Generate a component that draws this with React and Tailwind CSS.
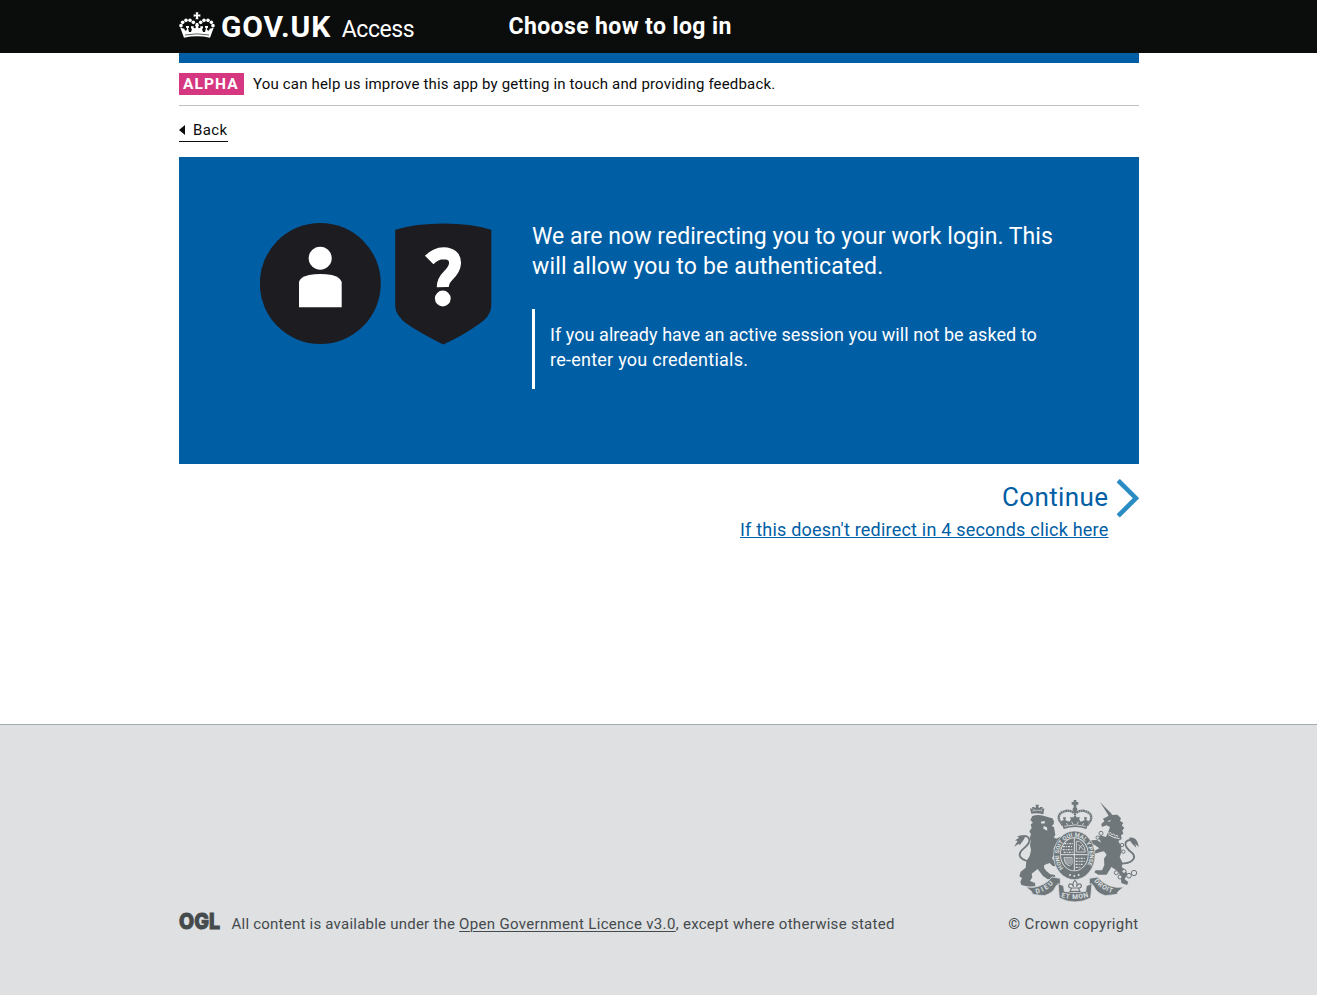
import React from 'react';

function GovCrown() {
  const pearls = [[33, 77], [38, 67], [48, 61], [60, 61], [70, 67]];
  return (
    <svg viewBox="27 36 108 78" className="h-[26px] w-[36px] shrink-0" fill="#fff" aria-hidden="true">
      <path d="M77 37h8l-1 7 7-1v7l-7-1 1 9h-8l1-9-7 1v-7l7 1z" />
      {pearls.map(([x, y]) => (
        <g key={x}>
          <circle cx={x} cy={y} r="5.4" />
          <circle cx={162 - x} cy={y} r="5.4" />
        </g>
      ))}
      <path d="M31 83l12 3 2 6 5-1 1-7-3-1v-5h9v5l-3 1 3 12 6 0 3-9-3-2v-6h8v5l5 1 2-5-3-3 3-8h6l3 8-3 3 2 5 5-1v-5h8v6l-3 2 3 9 6 0 3-12-3-1v-5h9v5l-3 1 1 7 5 1 2-6 12-3-11 30q-39-8-78 0z" />
      <path d="M45 105q36-7 72 0" stroke="#0b0c0c" fill="none" strokeWidth="2" />
    </svg>
  );
}

function IdentityIcons() {
  return (
    <svg viewBox="0 0 232 122" className="h-[122px] w-[232px]" aria-hidden="true">
      <g fill="#1d1c20">
        <circle cx="60.3" cy="60.5" r="60.5" />
        <path d="M135.2 6.8Q156 .5 183.300 .5Q211 .5 231.300 6.800V83Q231 93 219 101Q204 112 183.200 121.500Q162 111 147 101Q135.200 92 135.200 83Z" />
      </g>
      <g fill="#fff">
        <circle cx="60.2" cy="35.200" r="11.500" />
        <path d="M39 84.300V59Q40 54 49 52Q60 50.200 72 52Q80 54 81.700 59V84.300Z" />
        <circle cx="182.800" cy="75.500" r="7.900" />
      </g>
      <path d="M169.200 37Q176 30.200 183.500 30.200Q195.400 30.500 195 40.500Q194.700 46 188.500 52.300Q182.700 58 182.800 64.200" fill="none" stroke="#fff" strokeWidth="12" />
    </svg>
  );
}

function OglLogo() {
  return (
    <svg viewBox="-2 -6 45 30" className="-mx-[2px] -mb-[6px] -mt-[6px] h-[30px] w-[45px] shrink-0 overflow-visible" aria-label="OGL">
      <text x="0" y="17" textLength="41" lengthAdjust="spacingAndGlyphs" fontSize="21.500" fontWeight="800" fill="#454a4c" stroke="#454a4c" strokeWidth="1" className="font-['Inter',sans-serif]">OGL</text>
    </svg>
  );
}

function RoyalArms() {
  const INK = '#6f777b';
  const BG = '#dee0e2';
  return (
    <svg viewBox="27 15 375 306" className="h-[102px] w-[125px]" fill={INK} aria-hidden="true">
      {/* imperial crown */}
      <path d="M206 15h8v6h6v8h-6v8h-8v-8h-6v-8h6z" />
      <circle cx="210" cy="43" r="7" />
      <g fill="none" stroke={INK} strokeWidth="7" strokeDasharray="6 1">
        <path d="M206 53Q192 44 178 49Q156 56 163 76L174 92M214 53Q228 44 242 49Q264 56 257 76L246 92" />
        <path d="M210 48V86" />
      </g>
      <path d="M168 78l8-2-2-9h9l-2 9 12 4 5-8-4-5h32l-4 5 5 8 12-4-2-9h9l-2 9 8 2-8 24q-32-12-68 0z" />
      <path d="M178 94q32-9 64 0M184 84l4 6M236 84l-4 6M200 80l4 8M220 80l-4 8" fill="none" stroke={BG} strokeWidth="2.500" />

      {/* lion */}
      <path d="M79 56l-4-16 7 2-1-6 7 0 2 4 3-5-2-6h11l-2 6 3 5 3-4 7 0-1 6 6-2-3 18q-18-5-36-2z" />
      <path d="M82 48q15-5 30 0M84 42l4 3M111 42l-4 3" stroke={BG} strokeWidth="2" fill="none" />
      <path d="M82 63Q98 57 118 63L130 67 142 70 147 79 146 88 140 92 147 97 149 108 151 120 146 127 154 131 166 125 172 132 166 142 153 148 146 160 148 175 141 190 148 198 152 214 143 213 134 204 118 210 117 218 124 228 136 238 150 240 151 252 128 253 114 243 98 222 80 236 82 247 75 258 90 264 91 274 71 275 49 270 46 260 51 249 43 244 47 230 62 218 64 199 74 183 78 166 75 150 77 138 74 128 78 118 73 109 80 99 77 88 84 83 76 75Z" />
      <path d="M107 80l12-2 1 7-10 1zM116 93l10 4 1 10-12-6z" fill={BG} />
      <path d="M66 198Q36 188 47 170C55 158 76 150 73 133Q66 117 49 127" fill="none" stroke={INK} strokeWidth="5.500" />
      <path d="M62 122Q50 118 36 125L43 128 30 136 38 138 27 155 42 146 44 151 56 134Z" />

      {/* unicorn */}
      <path d="M285 21l36 37-8 7z" />
      <path d="M294 71L310 63 315 52 320 60 337 59 348 70 345 77 355 84 350 91 358 99 352 106 355 116 348 121 350 132 340 138 348 154 350 170 344 186 353 204 350 216 362 225 367 238 359 253 370 261 366 270 349 264 347 244 339 229 319 216 305 239 280 239 268 232 272 226 291 226 298 211 297 191 305 179 297 169 286 171 270 176 266 169 283 160 268 149 258 146 259 136 276 135 289 143 281 130 285 121 303 126 312 105 315 96 304 91 291 96 289 87 298 79Z" />
      <path d="M309 79l8-2M310 119q17 11 34 12" fill="none" stroke={BG} strokeWidth="3" />
      <path d="M307 108l5 8 4-4 5 8 5-4 5 8 5-4 3 6" fill="none" stroke={BG} strokeWidth="2.500" />
      <g fill={BG} stroke={INK} strokeWidth="3">
        <circle cx="288" cy="115" r="6" /><circle cx="278" cy="128" r="5" /><circle cx="351" cy="150" r="5" /><circle cx="355" cy="170" r="5" />
        <circle cx="334" cy="233" r="6" /><circle cx="345" cy="246" r="6" /><circle cx="357" cy="229" r="6" /><circle cx="372" cy="242" r="7" /><circle cx="387" cy="234" r="8" />
      </g>
      <path d="M348 206C378 206 394 192 384 176Q357 157 362 142Q369 131 385 137" fill="none" stroke={INK} strokeWidth="5.500" />
      <path d="M372 128Q390 126 397 140L402 156 391 147 394 158 383 148 378 142Z" />

      {/* garter and shield */}
      <ellipse cx="208" cy="181" rx="62" ry="73" stroke={BG} strokeWidth="2" />
      <ellipse cx="208" cy="178" rx="43" ry="51" fill={BG} />
      <ellipse cx="208" cy="178" rx="40.500" ry="48.500" />
      <g stroke={BG} fill="none">
        <path d="M208 129v98M168 179h80" strokeWidth="3" />
        <g strokeWidth="3.600" strokeDasharray="6 3 3 3">
          <path d="M178 146h26M174 155h30M173 164h31M176 172h28" />
          <path d="M212 190h30M212 199h28M212 208h24M212 217h16" />
        </g>
        <path d="M214 139q10-4 18 8q8 10 9 24h-27zM219 148l18 18M222 165q0-12 10-14" strokeWidth="2.500" />
        <path d="M177 188h24v18q-6 11-14 4q-10-8-10-22M183 190v16M189 190v19M195 190v17" strokeWidth="2.500" />
      </g>
      <path id="garter-arc" d="M176 219.500A46 55 0 1 1 240 219.500" fill="none" />
      <text fontSize="17.500" fontWeight="700" fill={BG} className="font-['Roboto',sans-serif]">
        <textPath href="#garter-arc" textLength="232" lengthAdjust="spacing">HONI SOIT QUI MAL Y PENSE</textPath>
      </text>
      <g fill={BG}><circle cx="195" cy="240" r="3" /><circle cx="208" cy="243" r="3" /><circle cx="221" cy="240" r="3" /></g>

      {/* motto scroll */}
      <g stroke={BG} strokeWidth="2.500">
        <path d="M63 276l22 1q35-5 56-31l25 4 0 22q-12-5-14 3-8 20-34 27l-29-3q-12-2-8-8z" />
        <path d="M356 276l-22 1q-35-5-56-31l-25 4 0 22q12-5 14 3 8 20 34 27l29-3q12-2 8-8z" />
        <path d="M159 266l17 6 2 17q32 7 64 0l2-17 17-6-4 43q-48 24-94 0z" />
      </g>
      <path id="motto-left" d="M94 296Q128 289 153 257" fill="none" />
      <path id="motto-mid" d="M168 306Q210 319 254 304" fill="none" />
      <path id="motto-right" d="M267 258Q290 288 328 295" fill="none" />
      <g fontSize="20" fontWeight="700" fill={BG} className="font-['Roboto',sans-serif]">
        <text><textPath href="#motto-left" textLength="60" lengthAdjust="spacing">DIEU</textPath></text>
        <text><textPath href="#motto-mid" textLength="84" lengthAdjust="spacing">ET MON</textPath></text>
        <text><textPath href="#motto-right" textLength="66" lengthAdjust="spacing">DROIT</textPath></text>
      </g>
      <path d="M210 256q10 9 4 19 8-13 14-6 4 7-5 10h-26q-9-3-5-10 6-7 14 6-6-10 4-19zM200 279h20l5 10h-30z" fill={BG} stroke={INK} strokeWidth="3.500" />
    </svg>
  );
}

export default function App() {
  return (
    <div className="flex h-[995px] flex-col overflow-hidden bg-white pl-px font-['Roboto','Liberation_Sans',sans-serif] text-[15px] text-[#0b0c0c]">
      <header className="-ml-px h-[53px] bg-[#0b0c0c] pl-px text-white">
        <div className="mx-auto flex w-[960px] items-start">
          <div className="flex w-[329.5px] items-start whitespace-nowrap">
            <div className="pt-3"><GovCrown /></div>
            <span className="ml-[6px] pt-[7px] text-[30px] font-bold leading-10 tracking-[0.9px]">GOV.UK</span>
            <span className="ml-[10.5px] pt-[10px] text-[23px] leading-10 tracking-[-0.4px]">Access</span>
          </div>
          <h1 className="pt-[7px] text-[23px] font-bold leading-10 tracking-[0.39px]">Choose how to log in</h1>
        </div>
      </header>

      <main className="mx-auto w-[960px] flex-1">
        <div className="h-[10px] bg-[#005ea5]" />
        <div className="flex h-[43px] items-start border-b border-[#bfc1c3] pt-[10px]">
          <strong className="h-[22px] w-[65px] bg-[#d53880] pl-[4px] text-[15.5px] font-bold leading-[22px] tracking-[1.1px] text-white">ALPHA</strong>
          <p className="ml-[9px] leading-[22px] tracking-[0.175px]">You can help us improve this app by getting in touch and providing feedback.</p>
        </div>
        <div className="h-[51px] pt-[14px]">
          <a className="flex h-[22px] w-[49px] items-start border-b border-[#0b0c0c] leading-5 tracking-[0.4px]">
            <span className="mr-2 mt-[5px] h-0 w-0 border-y-[5px] border-r-[6px] border-y-transparent border-r-[#0b0c0c]" />
            Back
          </a>
        </div>

        <section className="flex h-[307px] bg-[#005ea5] pl-[80.5px] pt-[65px] text-white">
          <div className="pt-px"><IdentityIcons /></div>
          <div className="ml-[40.5px] whitespace-nowrap">
            <p className="text-[23px] leading-[30px]">
              <span className="block tracking-[0.05px]">We are now redirecting you to your work login. This</span>
              <span className="block tracking-[0.17px]">will allow you to be authenticated.</span>
            </p>
            <div className="mt-[27px] h-[80px] border-l-[3px] border-white pl-[15px] pt-[13px] text-[18px] leading-[25px]">
              <span className="block tracking-[0.06px]">If you already have an active session you will not be asked to</span>
              <span className="block tracking-[0.25px]">re-enter you credentials.</span>
            </div>
          </div>
        </section>

        <a className="flex items-start justify-end pt-[15px] text-[#005ea5]">
          <span className="flex flex-col items-end">
            <span className="text-[26px] leading-9 tracking-[0.4px]">Continue</span>
            <span className="text-[18px] leading-[30px] tracking-[0.21px] underline decoration-1 underline-offset-1">If this doesn't redirect in 4 seconds click here</span>
          </span>
          <svg viewBox="0 0 23 39" className="ml-[7.5px] h-[39px] w-[23px]" fill="none" stroke="#2b8cc4" strokeWidth="4.600" aria-hidden="true">
            <path d="M2.200 1.500L20 19.200L2.200 36.900" />
          </svg>
        </a>
      </main>

      <footer className="-ml-px h-[271px] border-t border-[#a1acb2] bg-[#dee0e2] pl-px text-[#454a4c]">
        <div className="mx-auto flex w-[960px] items-end justify-between pt-[75px]">
          <div className="flex items-end">
            <div className="flex pb-[4px]"><OglLogo /></div>
            <p className="ml-[11.5px] leading-5 tracking-[0.285px]">
              <span className="tracking-[0.23px]">All content is available under the </span>
              <a className="tracking-[0.33px] underline decoration-1 underline-offset-2">Open Government Licence v3.0</a>, except where otherwise stated
            </p>
          </div>
          <div className="flex flex-col items-end">
            <RoyalArms />
            <p className="mr-[0.5px] mt-[12px] leading-5 tracking-[0.35px]">© Crown copyright</p>
          </div>
        </div>
      </footer>
    </div>
  );
}
